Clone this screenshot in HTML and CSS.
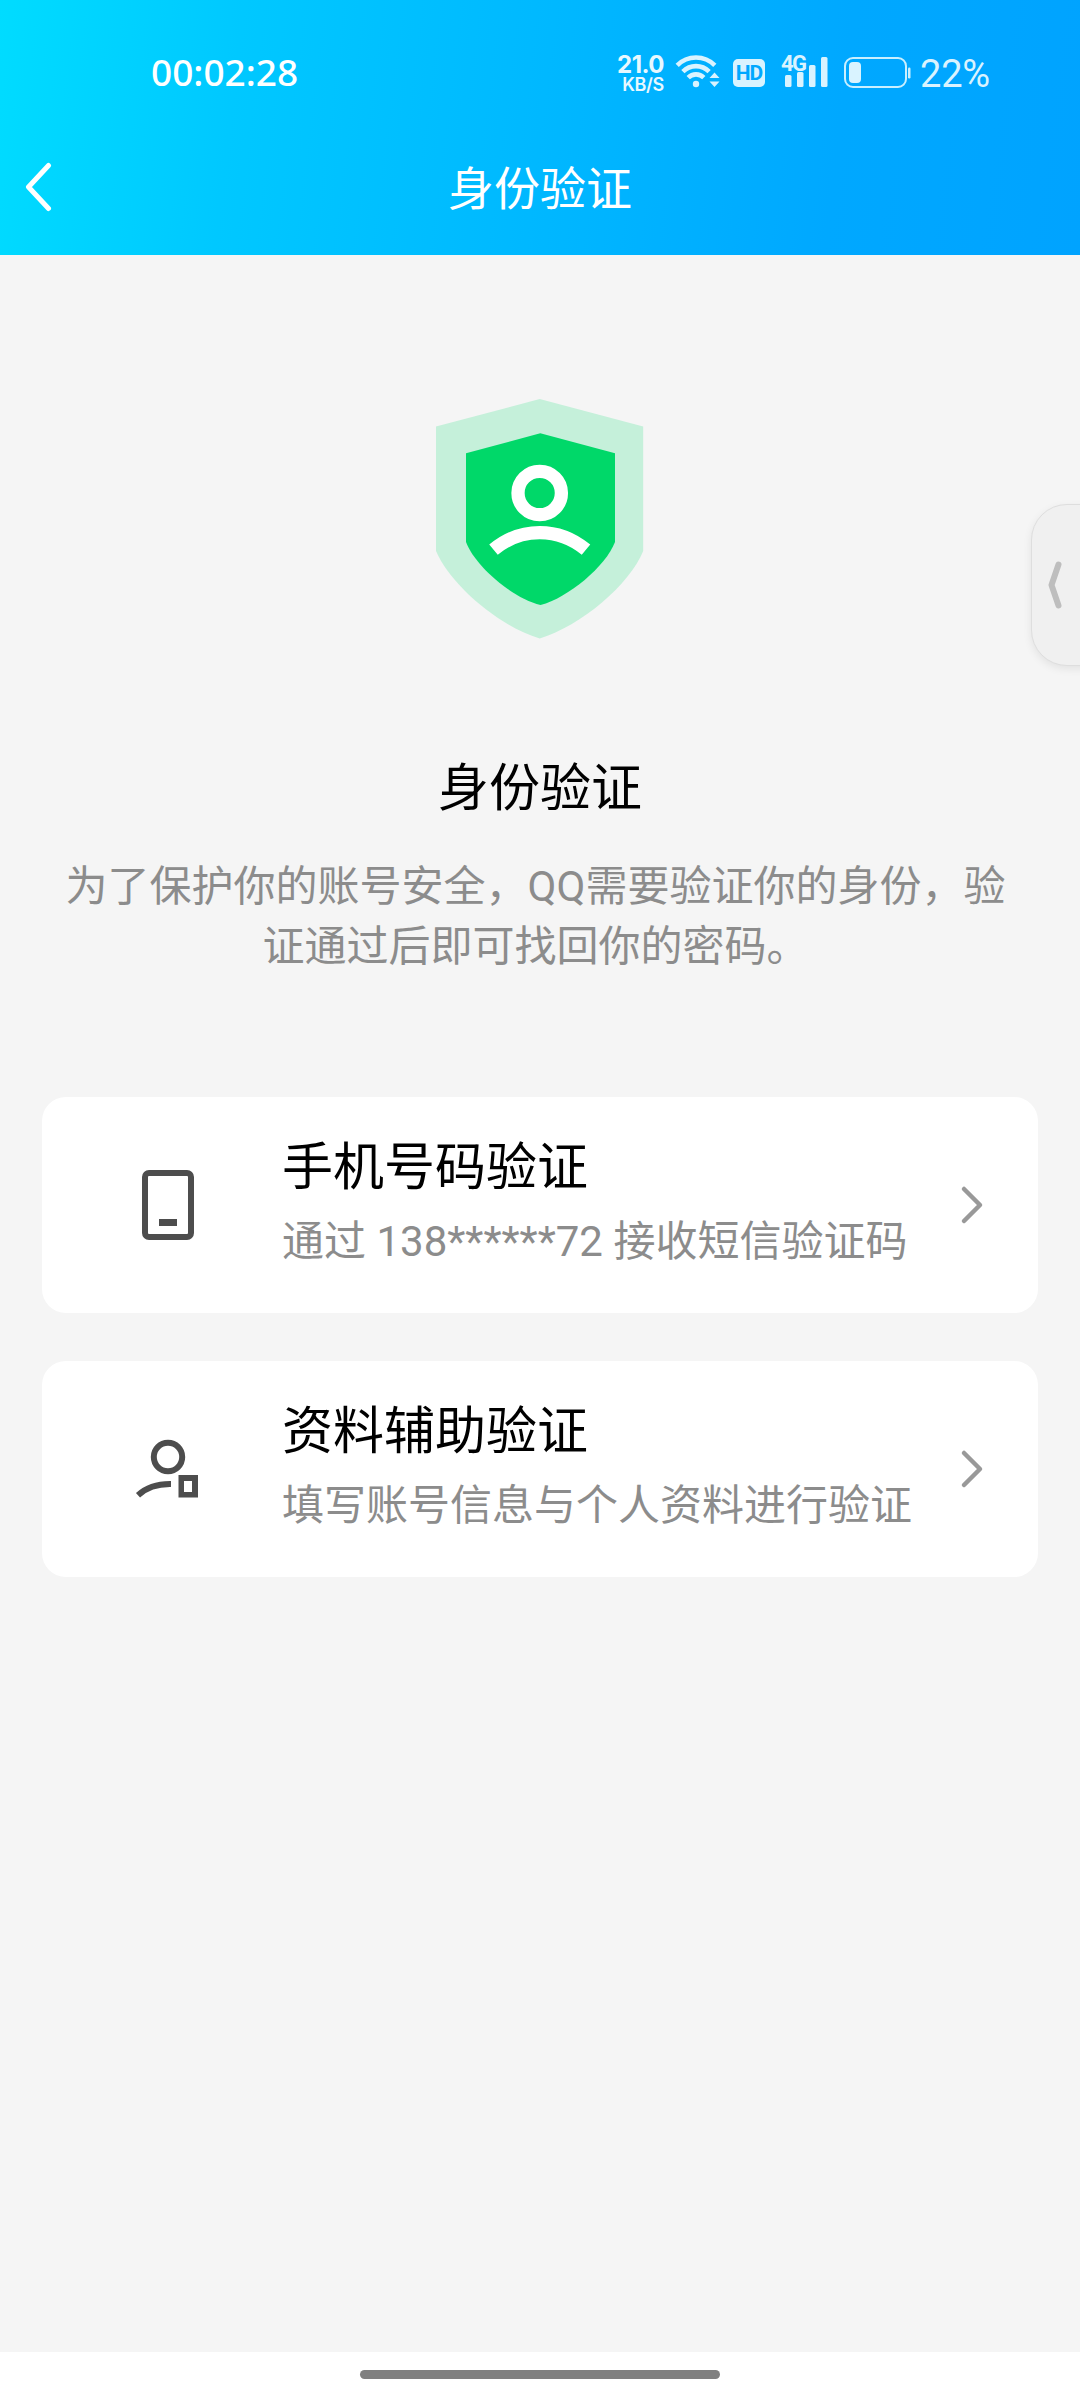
FILE: index.html
```html
<!DOCTYPE html>
<html lang="zh-CN">
<head>
<meta charset="utf-8">
<title>身份验证</title>
<link rel="stylesheet" href="styles.css">
</head>
<body>
<div class="screen">
  <header class="header">
    <div class="status">
      <span class="clock">00:02:28</span>
      <div class="indicators">
        <div class="speed"><span class="rate">21.0</span><span class="unit">KB/S</span></div>
        <svg class="wifi" width="46" height="36" viewBox="0 0 46 36" fill="none" stroke="#d9f3ff" stroke-width="4.6">
          <path d="M2.200 11.300A26.500 26.500 0 0 1 39.800 11.300M7.900 17.600A18.500 18.500 0 0 1 34.100 17.600M13.200 23.600A11 11 0 0 1 28.800 23.600"/>
          <circle cx="21" cy="30" r="3.200" fill="#d9f3ff" stroke="none"/>
          <path d="M34.500 24l5-5.500 5 5.500zM34.500 27.500h10l-5 5.500z" fill="#d9f3ff" stroke="none"/>
        </svg>
        <span class="hd">HD</span>
        <div class="cell">
          <span class="net">4G</span>
          <svg width="48" height="36" viewBox="0 0 48 36" fill="#d9f3ff">
            <rect x="3" y="21" width="6.500" height="12" rx="1.500"/>
            <rect x="15" y="18" width="6.500" height="15" rx="1.500"/>
            <rect x="27" y="11" width="6.500" height="22" rx="1.500"/>
            <rect x="39" y="3" width="6.500" height="30" rx="1.500"/>
          </svg>
        </div>
        <svg class="battery" width="68" height="32" viewBox="0 0 68 32">
          <rect x="1" y="1" width="61" height="29" rx="8" fill="none" stroke="#c9efff" stroke-width="2"/>
          <rect x="5" y="5" width="12" height="21" rx="4" fill="#d9f3ff"/>
          <rect x="64" y="10.500" width="2.500" height="11" rx="1.200" fill="#c9efff"/>
        </svg>
        <span class="percent">22%</span>
      </div>
    </div>
    <nav class="navbar">
      <svg class="back" width="28" height="52" viewBox="0 0 28 52" fill="none" stroke="#fff" stroke-width="5" stroke-linecap="round" stroke-linejoin="round"><path d="M24.500 4.500L4.500 26l20 21.500"/></svg>
      <h1 class="nav-title">身份验证</h1>
    </nav>
  </header>

  <main class="content">
    <svg class="shield" width="208" height="240" viewBox="0 0 208 240">
      <path d="M103.700 0L207.200 27.500V152C194 185 145 227 103.700 239.500C62 227 14 185 0 152V27.500z" fill="#c5f0da"/>
      <path d="M104.300 34.300L179 54.200V143C170 167 132 199 104.500 206C76 199 39 167 30 143V54.200z" fill="#00d869"/>
      <g fill="none" stroke="#fff" stroke-width="13.300">
        <circle cx="103.700" cy="94" r="21.700"/>
        <path d="M57.500 150.700Q78 133.600 103.700 133.600T150 150.700"/>
      </g>
    </svg>
    <h2 class="title">身份验证</h2>
    <p class="desc">为了保护你的账号安全，QQ需要验证你的身份，验<br>证通过后即可找回你的密码。</p>

    <div class="options">
      <a class="card">
        <svg class="icon" width="68" height="76" viewBox="0 0 68 76">
          <rect x="11" y="6" width="46" height="64" rx="4" fill="none" stroke="#4d4d4d" stroke-width="6"/>
          <path d="M25 52h18v7H25z" fill="#4d4d4d"/>
        </svg>
        <div class="label"><span class="name">手机号码验证</span><span class="hint">通过 138******72 接收短信验证码</span></div>
        <svg class="arrow" width="24" height="40" viewBox="0 0 24 40"><path d="M4 4l16 16L4 36"/></svg>
      </a>
      <a class="card">
        <svg class="icon" width="68" height="76" viewBox="0 0 68 76" fill="none" stroke="#4d4d4d" stroke-width="6">
          <circle cx="34" cy="26" r="14.200"/>
          <path d="M4 64.200Q16.500 52.700 37 53"/>
          <path d="M44.500 44h19.500v22.500H44.500zM50 50v11h8v-11z" fill="#4d4d4d" fill-rule="evenodd" stroke="none"/>
        </svg>
        <div class="label"><span class="name">资料辅助验证</span><span class="hint">填写账号信息与个人资料进行验证</span></div>
        <svg class="arrow" width="24" height="40" viewBox="0 0 24 40"><path d="M4 4l16 16L4 36"/></svg>
      </a>
    </div>
  </main>

  <aside class="edge-tab">
    <svg width="16" height="50" viewBox="0 0 16 50" fill="none" stroke="#bebebe" stroke-width="6" stroke-linecap="round" stroke-linejoin="round"><path d="M11.500 4.500l-7 20.500 7 20.500"/></svg>
  </aside>

  <footer class="home"><span class="pill"></span></footer>
</div>
</body>
</html>
```
FILE: styles.css
```css
* { box-sizing: border-box; margin: 0; padding: 0; }
body { background: #f5f5f5; font-family: Roboto, "Noto Sans CJK SC", sans-serif; }
.screen { position: relative; width: 1080px; height: 2400px; display: flex; flex-direction: column; overflow: hidden; }

.header { height: 255px; background: linear-gradient(97deg, #00dcff 0%, #00c8ff 22%, #00b8ff 50%, #00a8ff 77%, #00a3ff 100%); color: #fff; }
.status { height: 120px; padding: 0 89px 0 151px; display: flex; justify-content: space-between; }
.clock { margin-top: 47px; font: 500 37px/50px "Noto Sans", sans-serif; }
.indicators { display: flex; height: 40px; margin-top: 54px; color: #d9f3ff; }
.speed { display: flex; flex-direction: column; align-items: flex-end; width: 46px; margin-right: 11px; color: #e8f8ff; font-family: Inter, sans-serif; }
.rate { font-size: 24px; line-height: 22px; font-weight: 700; letter-spacing: -0.5px; }
.unit { font-size: 18px; line-height: 17px; font-weight: 600; letter-spacing: -0.3px; }
.wifi { margin-right: 12px; }
.hd { width: 32px; height: 28px; margin: 5px 17px 0 0; border-radius: 5px; background: #d9f3ff; color: #00a8ff; font: 700 21px/28px Roboto, sans-serif; text-align: center; letter-spacing: -1px; }
.cell { position: relative; width: 48px; margin-right: 14px; }
.net { position: absolute; left: -1px; top: -1px; font: 700 22px/22px Roboto, sans-serif; letter-spacing: -1.5px; }
.battery { margin: 3px 8px 0 0; }
.percent { width: 71px; font: 400 38px/41px Roboto, sans-serif; letter-spacing: -0.2px; white-space: nowrap; }
.navbar { height: 135px; display: grid; grid-template-columns: 200px 1fr 200px; align-items: center; }
.back { margin: -2px 0 0 24px; }
.nav-title { padding-top: 2px; text-align: center; font-size: 46px; line-height: 60px; font-weight: 400; }

.content { flex: 1; display: flex; flex-direction: column; align-items: center; padding-top: 144px; }
.shield { flex: none; }
.title { margin-top: 113px; font-size: 51px; line-height: 74px; font-weight: 400; color: #000; }
.desc { margin-top: 31px; padding-right: 9px; font-size: 42px; line-height: 60px; color: #8c8c8c; text-align: center; white-space: nowrap; }
.options { width: 996px; margin-top: 120px; display: flex; flex-direction: column; gap: 48px; }
.card { height: 216px; padding: 0 54px 0 92px; display: flex; align-items: center; background: #fff; border-radius: 24px; }
.icon { flex: none; }
.label { flex: 1; margin-left: 80px; padding-bottom: 7px; display: flex; flex-direction: column; white-space: nowrap; }
.name { font-size: 51px; line-height: 74px; color: #000; }
.hint { font-size: 42px; line-height: 60px; margin-top: 7px; color: #8c8c8c; }
.arrow { fill: none; stroke: #999; stroke-width: 4.5; stroke-linecap: round; stroke-linejoin: round; }

.edge-tab { position: absolute; left: 1031px; top: 504px; width: 60px; height: 162px; padding-left: 15px; display: flex; align-items: center; background: #f0f0f0; border: 1px solid #dedede; border-radius: 36px 0 0 36px; box-shadow: 0 3px 8px rgba(0,0,0,.08); }
.home { height: 48px; padding-top: 18px; background: #fff; display: flex; justify-content: center; }
.pill { width: 360px; height: 9px; border-radius: 5px; background: #808080; }
```
